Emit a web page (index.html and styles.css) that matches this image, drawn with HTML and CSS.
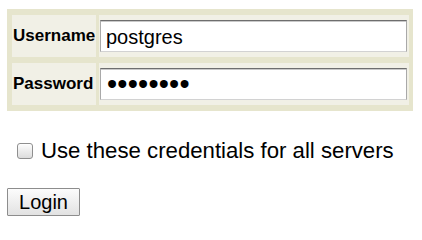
FILE: index.html
```html
<!DOCTYPE html>
<html lang="en">
<head>
<meta charset="utf-8">
<title>Login</title>
<link rel="stylesheet" href="styles.css">
</head>
<body>
<form class="page" action="#" onsubmit="return false">
  <div class="creds">
    <label class="label" for="user">Username</label>
    <div class="field"><input class="text" id="user" type="text" value="postgres"></div>
    <label class="label" for="pass">Password</label>
    <div class="field"><input class="text pass" id="pass" type="password" value="postgres"></div>
  </div>
  <label class="remember"><input class="check" type="checkbox"><span>Use these credentials for all servers</span></label>
  <button class="login" type="submit">Login</button>
</form>
</body>
</html>
```
FILE: styles.css
```css
html, body {
  margin: 0;
  background: #ffffff;
}
body {
  font-family: "Liberation Sans", Arial, Helvetica, sans-serif;
  color: #000;
}
.page {
  display: flex;
  flex-direction: column;
  align-items: flex-start;
  padding: 9px 0 0 7px;
  margin: 0;
}
.creds {
  display: grid;
  grid-template-columns: 84px 310px;
  gap: 6px 3px;
  padding: 6px 4px 6px 5px;
  background: #e6e5cd;
}
.label {
  display: flex;
  align-items: center;
  padding-left: 1px;
  background: #f1f0e6;
  font-weight: bold;
  font-size: 17px;
}
.field {
  background: #f1f0e6;
  padding: 5px 2px 5px 1px;
}
.text {
  display: block;
  box-sizing: border-box;
  width: 307px;
  height: 32px;
  margin: 0;
  padding: 3px 4px 0 5px;
  font-family: "Liberation Sans", Arial, sans-serif;
  font-size: 20px;
  color: #000;
  background: #fff;
  border: 1px solid;
  border-color: #6e6e6e #a9a9a9 #d2d2d2 #a9a9a9;
  box-shadow: inset 0 1px 0 #c9c9c9;
  outline: none;
}
.pass {
  font-size: 29px;
  padding: 0 4px 0 6px;
  letter-spacing: 0.2px;
}
.remember {
  display: flex;
  align-items: center;
  gap: 8px;
  margin: 27px 0 0 10px;
  height: 25px;
  font-size: 22.2px;
  line-height: 25px;
}
.check {
  appearance: none;
  -webkit-appearance: none;
  box-sizing: border-box;
  width: 16px;
  height: 16px;
  margin: 0;
  border: 1px solid #8f8f8f;
  border-radius: 3px;
  background: linear-gradient(#fdfdfd, #dcdcdc);
  box-shadow: inset 0 1px 1px rgba(255,255,255,0.8);
}
.login {
  box-sizing: border-box;
  width: 73px;
  height: 28px;
  margin-top: 25px;
  padding: 0;
  font-family: "Liberation Sans", Arial, sans-serif;
  font-size: 20px;
  color: #000;
  background: linear-gradient(#fcfcfc, #e2e2e2);
  border: 1px solid #8d8d8d;
  border-radius: 1px;
}
```
